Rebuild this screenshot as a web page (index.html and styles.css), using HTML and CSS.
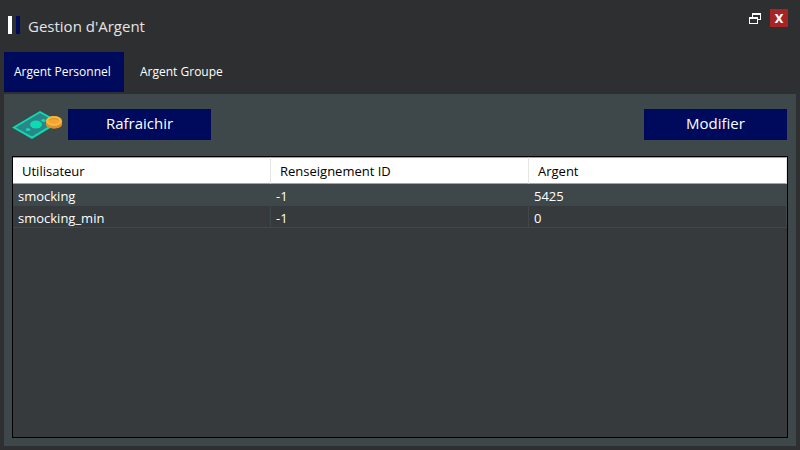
FILE: index.html
```html
<!DOCTYPE html>
<html lang="fr">
<head>
<meta charset="utf-8">
<title>Gestion d'Argent</title>
<link rel="stylesheet" href="styles.css">
</head>
<body>
<div class="window">
  <header class="titlebar">
    <span class="mark"></span>
    <h1>Gestion d'Argent</h1>
    <div class="controls">
      <button class="restore" type="button" aria-label="Restaurer">
        <svg width="12" height="11" viewBox="0 0 12 11" shape-rendering="crispEdges" fill="#fff" aria-hidden="true">
          <path fill-rule="evenodd" d="M0 4h9v7H0zM1 6v4h7V6zM3 0h9v7h-3V6h2V2H4v2H3z"/>
        </svg>
      </button>
      <button class="close" type="button">X</button>
    </div>
  </header>
  <nav class="tabs">
    <button class="tab active" type="button">Argent Personnel</button>
    <button class="tab" type="button">Argent Groupe</button>
  </nav>
  <main class="panel">
    <div class="toolbar">
      <svg class="money" width="50" height="28" viewBox="0 0 50 28" aria-hidden="true">
        <path d="M0 16.500 28 0 48 11 20 28z" fill="#0bdcb2"/>
        <path d="M3.500 16.500 28 2 44 11 20 25.500z" fill="#2b8787"/>
        <ellipse cx="24" cy="13.500" rx="6" ry="4" fill="#0bdcb2"/>
        <ellipse cx="16" cy="18.500" rx="2.200" ry="1.500" fill="#0bdcb2"/>
        <ellipse cx="31.500" cy="9.500" rx="2.200" ry="1.500" fill="#0bdcb2"/>
        <path d="M34 10v3.500c0 5.500 16 5.500 16 0V10z" fill="#de9032"/>
        <ellipse cx="42" cy="10" rx="8" ry="5" fill="#ffb837"/>
        <ellipse cx="42" cy="10" rx="5.500" ry="3" fill="#f0a832"/>
        <path d="M36.500 10c1-4 10-4 11 0-2-2.500-9-2.500-11 0z" fill="#de9032"/>
      </svg>
      <button class="action" type="button">Rafraichir</button>
      <button class="action last" type="button">Modifier</button>
    </div>
    <div class="list">
      <table>
        <thead>
          <tr><th scope="col">Utilisateur</th><th scope="col">Renseignement ID</th><th scope="col">Argent</th></tr>
        </thead>
        <tbody>
          <tr class="selected"><td>smocking</td><td>-1</td><td>5425</td></tr>
          <tr><td>smocking_min</td><td>-1</td><td>0</td></tr>
        </tbody>
      </table>
    </div>
  </main>
</div>
</body>
</html>
```
FILE: styles.css
```css
* { box-sizing: border-box; }

body {
  margin: 0;
  background: #2d2f31;
  color: #fff;
  font-family: "Open Sans", "Noto Sans", sans-serif;
  font-size: 13px;
}

button {
  margin: 0;
  padding: 0;
  border: 0;
  background: none;
  color: inherit;
  font: inherit;
}

.window {
  display: flex;
  flex-direction: column;
  min-height: 100vh;
  padding: 0 4px 4px;
}

.titlebar {
  display: flex;
  align-items: flex-start;
  height: 52px;
  padding: 9px 8px 0 4px;
}

.mark {
  width: 12px;
  height: 18px;
  margin-top: 7px;
  border-left: 4px solid #fff;
  border-right: 4px solid #000a5c;
}

h1 {
  margin: 7px 0 0 8px;
  color: #e4e4e4;
  font-size: 15px;
  font-weight: 400;
  line-height: 20px;
}

.controls {
  display: flex;
  align-items: center;
  gap: 9px;
  margin-left: auto;
}

.restore { display: flex; }

.close {
  width: 18px;
  height: 18px;
  background: #a82424;
  font-family: "DejaVu Sans Condensed", "DejaVu Sans", sans-serif;
  font-size: 13px;
  font-weight: 700;
  line-height: 20px;
}

.tabs { display: flex; }

.tab {
  height: 40px;
  padding: 0 10px 2px;
  font-size: 12px;
  text-align: left;
}

.active {
  min-width: 120px;
  margin-right: 6px;
  background: #000a5c;
}

.panel {
  display: flex;
  flex: 1;
  flex-direction: column;
  margin-top: 2px;
  padding: 15px 8px 8px;
  background: #3e4749;
}

.toolbar {
  display: flex;
  align-items: center;
  gap: 6px;
  margin-bottom: 16px;
  padding-right: 1px;
}

.action {
  width: 143px;
  height: 31px;
  padding-bottom: 3px;
  background: #000a5c;
  font-size: 15px;
}

.last { margin-left: auto; }

.list {
  flex: 1;
  border: 1px solid #000;
  background: #363a3c;
}

table {
  width: 100%;
  border-collapse: separate;
  border-spacing: 0;
  table-layout: fixed;
}

th, td {
  text-align: left;
  font-weight: 400;
}

th {
  height: 27px;
  padding: 0 9px;
  border-top: 1px solid #a0a0a0;
  border-bottom: 1px solid #a0a5a5;
  border-right: 1px solid #e5e5e5;
  background: #fff;
  color: #000;
}

td {
  height: 22px;
  padding: 2px 5px 0;
  border-right: 1px solid #3e4749;
  border-bottom: 1px solid #3e4749;
}

.selected { background: #3e4749; }
```
